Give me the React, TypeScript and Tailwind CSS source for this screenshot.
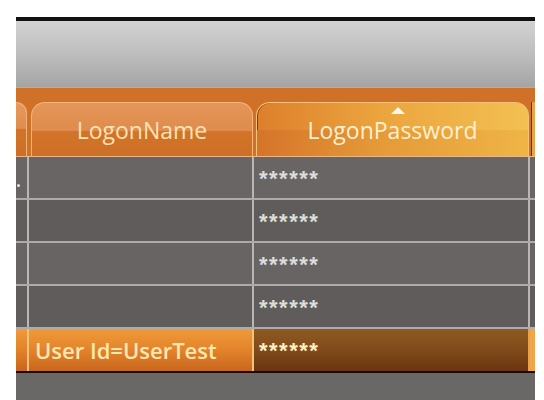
const COLS = "grid grid-cols-[13px_225px_276px_5px]";

const ROWS = [
  { bg: "bg-[#696564]" },
  { bg: "bg-[#5f5c5b]" },
  { bg: "bg-[#686463]" },
  { bg: "bg-[#5f5c5b]" },
];

function Stars({ color }: { color: string }) {
  return (
    <span
      className={`translate-y-[1px] text-[22px] font-bold leading-none tracking-[1.5px] ${color} [font-family:'Liberation_Sans',sans-serif]`}
    >
      ******
    </span>
  );
}

function HeaderTabs() {
  return (
    <div className={`${COLS} h-[68px] bg-[#d0712a] pt-[14px]`}>
      <div className="relative">
        <div className="h-full w-[11px] rounded-tr-[14px] border-t border-r border-[#f2b27a] bg-[linear-gradient(to_bottom,#e69a5e_0%,#e08c4c_48%,#d27428_50%,#cd6e26_100%)]" />
      </div>
      <div className="pl-[2px] pr-[1px]">
        <div className="flex h-full items-center justify-center rounded-t-[14px] border border-b-0 border-[#f3b57c] bg-[linear-gradient(to_bottom,#e49658_0%,#df8c4e_52%,#d27529_53%,#cd6f27_100%)] pt-[1px]">
          <span className="text-[23px] font-medium leading-none text-[#fbe2b4] [font-family:'Open_Sans',sans-serif]">
            LogonName
          </span>
        </div>
      </div>
      <div className="pl-[2px] pr-[1px]">
        <div className="relative flex h-full items-center justify-center rounded-t-[14px] border border-b-0 border-[#f6c278] bg-[linear-gradient(to_right,#dd7f2c_0%,#eba43e_45%,#f3c052_100%)] shadow-[inset_1px_0_0_#7a3a10]">
          <div className="absolute inset-x-0 bottom-0 h-[26px] bg-[linear-gradient(to_right,#d5742a_0%,#e59a38_45%,#efb446_100%)]" />
          <div className="absolute left-1/2 top-[4px] h-0 w-0 -translate-x-[2px] border-x-[7px] border-b-[7px] border-x-transparent border-b-[#fff8e8]" />
          <span className="relative pt-[1px] text-[23px] font-medium leading-none text-[#fdefd2] [font-family:'Open_Sans',sans-serif]">
            LogonPassword
          </span>
        </div>
      </div>
      <div className="pl-[1px]">
        <div className="h-full border-l border-[#6a2e10] bg-[#e8a24c]" />
      </div>
    </div>
  );
}

function Row({ bg, first }: { bg: string; first: boolean }) {
  return (
    <div className={`${COLS} h-[43px] ${bg} border-b-2 border-[#aeacab]`}>
      <div className="relative border-r-2 border-[#b9b7b6]">
        {first ? (
          <span className="absolute left-[1px] top-[27px] h-[3px] w-[3px] rounded-full bg-[#e6e6e6]" />
        ) : null}
      </div>
      <div className="border-r-2 border-[#b9b7b6]" />
      <div className="flex items-center border-r-2 border-[#b9b7b6] pl-[5px]">
        <Stars color="text-[#dcdcdc]" />
      </div>
      <div />
    </div>
  );
}

export default function App() {
  return (
    <div className="h-[400px] w-[544px] overflow-hidden bg-white pt-[17px] pl-[16px]">
      <div className="flex w-[519px] flex-col">
        <div className="h-[4px] bg-[#111]" />
        <div className="h-[67px] border-b border-[#c9a78a] bg-[linear-gradient(to_bottom,#d2d2d2_0%,#bebebe_50%,#a4a4a4_100%)]" />
        <HeaderTabs />
        <div className="h-[1px] bg-[#e8b888]" />
        {ROWS.map((r, i) => (
          <Row key={i} bg={r.bg} first={i === 0} />
        ))}
        <div className={`${COLS} h-[42px]`}>
          <div className="border-r-2 border-[#f3c27a] bg-[linear-gradient(to_bottom,#ef9b3c_0%,#e2822a_50%,#c8651e_100%)]" />
          <div className="flex items-center border-r-2 border-[#f3c27a] bg-[linear-gradient(to_bottom,#ef9a3a_0%,#e5862c_45%,#c9661e_100%)] pl-[6px]">
            <span className="text-[22px] font-semibold leading-none text-[#ffe7b2] [font-family:'Open_Sans',sans-serif]">
              User Id=UserTest
            </span>
          </div>
          <div className="flex items-center border-r-2 border-[#e8a04a] bg-[linear-gradient(to_bottom,#8e5a22_0%,#804a1a_50%,#6a3410_100%)] pl-[5px]">
            <Stars color="text-[#fff0c4]" />
          </div>
          <div className="bg-[#f0a648]" />
        </div>
        <div className="h-[2px] bg-[#1a0c04]" />
        <div className="h-[40px] bg-[#6a6867]" />
      </div>
    </div>
  );
}
